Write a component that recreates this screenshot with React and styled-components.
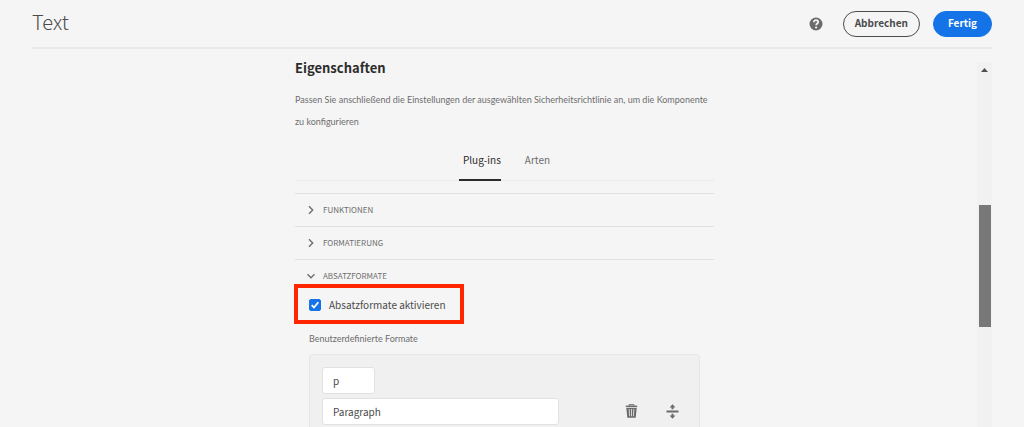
import React from "react";
import styled, { createGlobalStyle } from "styled-components";

const GlobalStyle = createGlobalStyle`
  *, *::before, *::after { box-sizing: border-box; }
  body {
    margin: 0;
    background: #f5f5f5;
    color: #4b4b4b;
    font-family: "Noto Sans CJK SC", "Noto Sans", sans-serif;
    font-size: 10px;
    line-height: 20px;
  }
  button, input { font: inherit; color: inherit; }
`;

const Page = styled.div`
  display: flex;
  flex-direction: column;
  height: 100vh;
  padding: 0 32px;
  overflow: hidden;
`;

const Header = styled.header`
  display: flex;
  align-items: center;
  flex: none;
  height: 49px;
  border-bottom: 2px solid #e9e9e9;
`;

const Title = styled.h1`
  margin: 0 auto 0 0;
  padding-bottom: 4px;
  font-size: 20px;
  line-height: 28px;
  font-weight: 300;
`;

const IconButton = styled.button`
  display: flex;
  padding: 0;
  border: 0;
  background: none;
  color: #6b6b6b;
  cursor: pointer;
`;

const HelpButton = styled(IconButton)`
  margin-right: 20px;
`;

const PillButton = styled.button`
  height: 26px;
  padding: 0 ${(p) => (p.$primary ? 14 : 11)}px 1px;
  border: 1px solid ${(p) => (p.$primary ? "#1473e6" : "#4b4b4b")};
  border-radius: 13px;
  background: ${(p) => (p.$primary ? "#1473e6" : "transparent")};
  color: ${(p) => (p.$primary ? "#fff" : "#4b4b4b")};
  font-weight: 700;
  cursor: pointer;
  & + & { margin-left: 13px; }
`;

const Body = styled.div`
  display: flex;
  flex: 1;
  min-height: 0;
`;

const Content = styled.main`
  flex: 1;
  min-width: 0;
  padding-top: 9px;
  overflow: hidden;
`;

const Column = styled.div`
  max-width: 419px;
  margin: 0 auto;
`;

const Heading = styled.h2`
  margin: 0 0 11px;
  font-size: 13px;
  line-height: 20px;
  font-weight: 700;
  color: #2c2c2c;
`;

const Description = styled.p`
  margin: 0;
  font-family: Lato, "Noto Sans", sans-serif;
  font-size: 9px;
  line-height: 22px;
  color: #6e6e6e;
`;

const Tabs = styled.div`
  display: flex;
  justify-content: center;
  gap: 20px;
  margin: 8px 0 12px;
  border-bottom: 1px solid #eaeaea;
`;

const Tab = styled.button`
  height: 40px;
  margin-bottom: -1px;
  padding: 0 0 1px 4px;
  border: 0;
  border-bottom: 2px solid ${(p) => (p.$active ? "#2c2c2c" : "transparent")};
  background: none;
  color: ${(p) => (p.$active ? "#2c2c2c" : "#6e6e6e")};
  cursor: pointer;
`;

const SectionButton = styled.button`
  display: flex;
  align-items: center;
  gap: 7px;
  width: 100%;
  height: 33px;
  padding: 0 11px;
  border: 0;
  border-top: 1px solid #e1e1e1;
  background: none;
  color: #6e6e6e;
  font-size: 8px;
  cursor: pointer;
`;

const SectionBody = styled.div`
  padding: 0 14px;
`;

const CheckLabel = styled.label`
  position: relative;
  display: flex;
  align-items: center;
  gap: 8px;
  width: fit-content;
  height: 26px;
  &::after {
    content: "";
    position: absolute;
    inset: -8px -18px -6px -15px;
    border: 4px solid #ff2600;
    pointer-events: none;
  }
`;

const Checkbox = styled.input`
  width: 12px;
  height: 12px;
  margin: 0;
  appearance: none;
  border: 1px solid #6e6e6e;
  border-radius: 2px;
  &:checked { border-color: #1473e6; background: #1473e6; }
`;

const CheckBox = styled.span`
  display: grid;
  > * { grid-area: 1 / 1; }
  > svg { pointer-events: none; }
`;

const FieldTitle = styled.h3`
  margin: 11px 0 5px;
  font-family: Lato, "Noto Sans", sans-serif;
  font-size: 9px;
  line-height: 20px;
  font-weight: 400;
  color: #6e6e6e;
`;

const FormatPanel = styled.div`
  display: flex;
  flex-direction: column;
  gap: 4px;
  padding: 12px;
  border: 1px solid #e6e6e6;
  border-radius: 4px;
  background: #f0f0f0;
`;

const FormatRow = styled.div`
  display: flex;
  align-items: center;
`;

const TextInput = styled.input`
  width: ${(p) => (p.$short ? "53px" : "65%")};
  min-width: 0;
  height: 27px;
  padding: 0 10px;
  border: 1px solid #e1e1e1;
  border-radius: 3px;
  background: #fff;
`;

const RowActions = styled.div`
  display: flex;
  gap: 28px;
  margin: 0 8px 0 auto;
`;

const ScrollTrack = styled.div`
  display: flex;
  flex-direction: column;
  align-items: center;
  width: 15px;
  margin-top: 13px;
  padding-top: 6px;
  background: #f1f1f1;
`;

const ScrollThumb = styled.div`
  width: 12px;
  height: 34%;
  margin-top: 133px;
  background: #787878;
`;

const HelpIcon = () => (
  <svg width="14" height="14" viewBox="0 0 14 14" aria-hidden="true">
    <circle cx="7" cy="7" r="6.5" fill="currentColor" />
    <path d="M4.9 5.2C4.9 3.7 5.8 3.1 7 3.1S9.2 3.8 9.2 5C9.2 6.6 7.2 6.5 7.2 8.2" fill="none" stroke="#f5f5f5" strokeWidth="1.8" />
    <circle cx="7.1" cy="10.5" r="1.1" fill="#f5f5f5" />
  </svg>
);

const Chevron = ({ open }) => (
  <svg width="10" height="10" viewBox="0 0 10 10" fill="none" stroke="currentColor" strokeWidth="1.4" aria-hidden="true">
    <path d={open ? "M1.5 3.3L5 6.8L8.5 3.3" : "M3 1.3L6.7 5L3 8.7"} />
  </svg>
);

const CheckMark = () => (
  <svg width="12" height="12" viewBox="0 0 12 12" fill="none" stroke="#fff" strokeWidth="1.8" aria-hidden="true">
    <path d="M2.7 6.2L5 8.5L9.3 3.2" />
  </svg>
);

const TrashIcon = () => (
  <svg width="13" height="14" viewBox="0 0 13 14" aria-hidden="true">
    <path d="M4 1.8V.7H9V1.8" fill="none" stroke="currentColor" />
    <path d="M.8 1.6H12.2V3.2H.8Z" fill="currentColor" />
    <path d="M1.3 3.9H11.7L10.7 13.7H2.3Z" fill="currentColor" />
    <path d="M4.2 5L4.6 12.2M6.5 5V12.2M8.8 5L8.4 12.2" stroke="#f0f0f0" strokeWidth=".8" />
  </svg>
);

const MoveIcon = () => (
  <svg width="13" height="15" viewBox="0 0 13 15" fill="currentColor" aria-hidden="true">
    <path d="M.5 6.6H12.5V8.4H.5ZM6.5 .2L9.4 3.5H7.5V5.2H5.5V3.5H3.6ZM6.5 14.8L9.4 11.5H7.5V9.8H5.5V11.5H3.6Z" />
  </svg>
);

const ArrowUp = () => (
  <svg width="7" height="4" viewBox="0 0 7 4" fill="#505050" aria-hidden="true">
    <path d="M0 4L3.5 0L7 4Z" />
  </svg>
);

const Section = ({ title, open, children }) => (
  <section>
    <SectionButton type="button" aria-expanded={!!open}>
      <Chevron open={open} />
      {title}
    </SectionButton>
    {open && <SectionBody>{children}</SectionBody>}
  </section>
);

export default function App() {
  return (
    <>
      <GlobalStyle />
      <Page>
        <Header>
          <Title>Text</Title>
          <HelpButton type="button" aria-label="Hilfe"><HelpIcon /></HelpButton>
          <PillButton type="button">Abbrechen</PillButton>
          <PillButton type="button" $primary>Fertig</PillButton>
        </Header>
        <Body>
          <Content>
            <Column>
              <Heading>Eigenschaften</Heading>
              <Description>
                Passen Sie anschließend die Einstellungen der ausgewählten Sicherheitsrichtlinie an, um die Komponente zu konfigurieren
              </Description>
              <Tabs role="tablist">
                <Tab type="button" role="tab" aria-selected="true" $active>Plug-ins</Tab>
                <Tab type="button" role="tab" aria-selected="false">Arten</Tab>
              </Tabs>
              <Section title="FUNKTIONEN" />
              <Section title="FORMATIERUNG" />
              <Section title="ABSATZFORMATE" open>
                <CheckLabel>
                  <CheckBox>
                    <Checkbox type="checkbox" defaultChecked />
                    <CheckMark />
                  </CheckBox>
                  Absatzformate aktivieren
                </CheckLabel>
                <FieldTitle>Benutzerdefinierte Formate</FieldTitle>
                <FormatPanel>
                  <FormatRow>
                    <TextInput $short aria-label="Tag" defaultValue="p" />
                  </FormatRow>
                  <FormatRow>
                    <TextInput aria-label="Beschreibung" defaultValue="Paragraph" />
                    <RowActions>
                      <IconButton type="button" aria-label="Löschen"><TrashIcon /></IconButton>
                      <IconButton type="button" aria-label="Verschieben"><MoveIcon /></IconButton>
                    </RowActions>
                  </FormatRow>
                </FormatPanel>
              </Section>
            </Column>
          </Content>
          <ScrollTrack aria-hidden="true">
            <ArrowUp />
            <ScrollThumb />
          </ScrollTrack>
        </Body>
      </Page>
    </>
  );
}
